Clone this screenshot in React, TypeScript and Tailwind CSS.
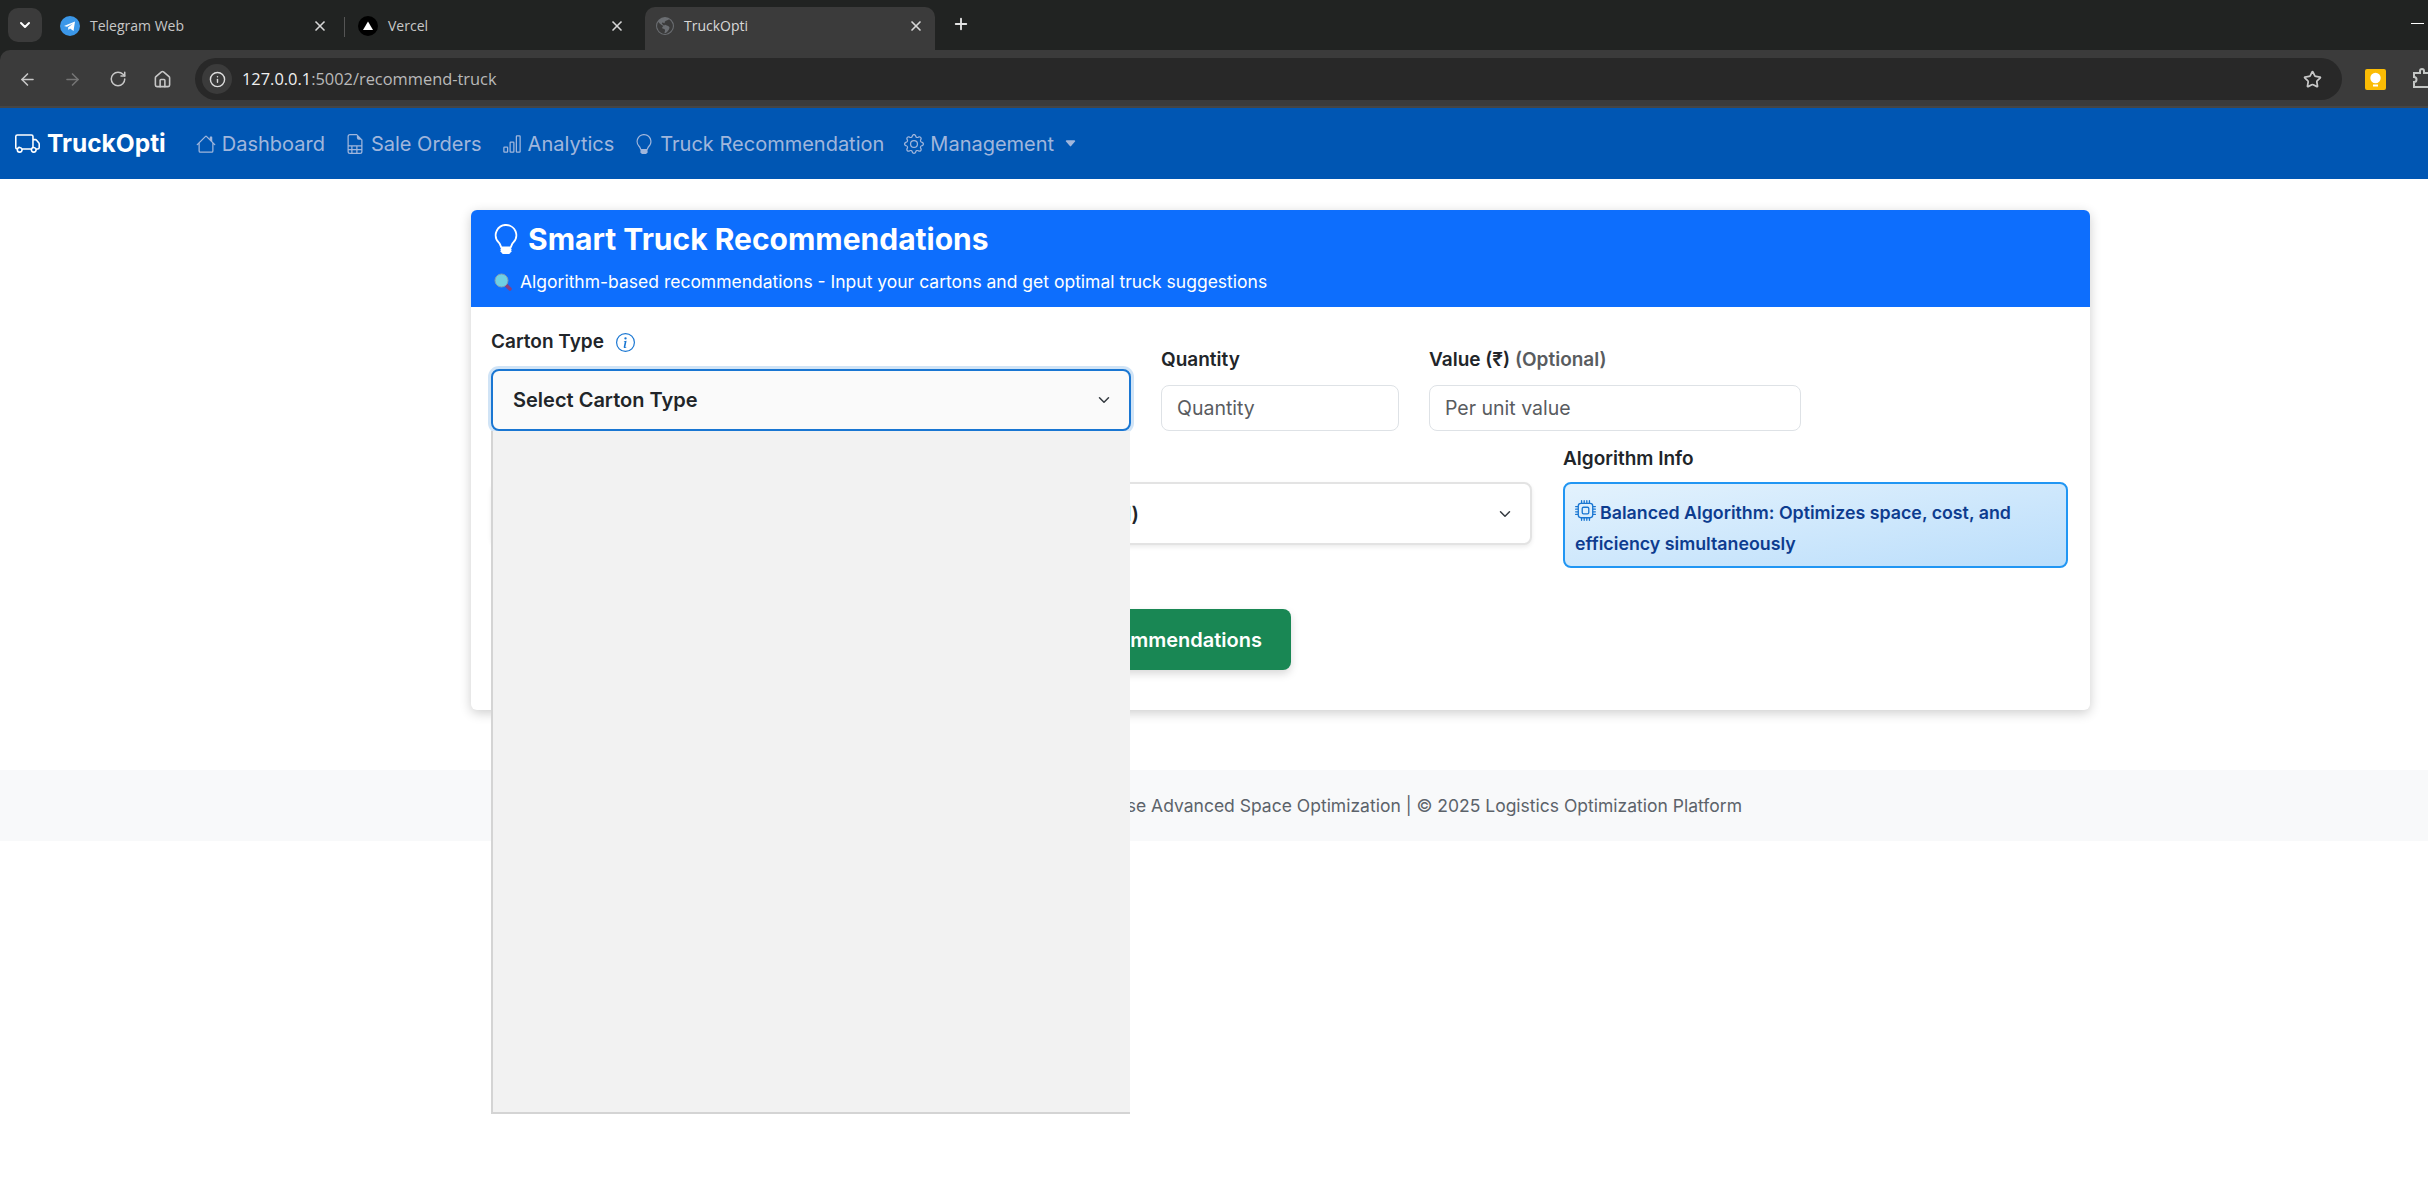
import { ArrowLeft, ArrowRight, ChevronDown, Home, Info, Plus, RotateCw, Star, X } from 'lucide-react';
import {
  BsBarChart,
  BsCaretDownFill,
  BsCpu,
  BsFileEarmarkSpreadsheet,
  BsGear,
  BsGlobeAmericas,
  BsHouse,
  BsInfoCircle,
  BsLightbulb,
  BsTruck,
} from 'react-icons/bs';

const navLinks = [
  { label: 'Dashboard', icon: BsHouse },
  { label: 'Sale Orders', icon: BsFileEarmarkSpreadsheet },
  { label: 'Analytics', icon: BsBarChart },
  { label: 'Truck Recommendation', icon: BsLightbulb },
];

function TelegramIcon() {
  return (
    <svg viewBox="0 0 20 20" className="w-5 h-5 shrink-0">
      <circle cx="10" cy="10" r="10" fill="#3b97e8" />
      <path d="M4 10 15 5.5 13.5 15 10 12.5 8.5 14 8 11.5 13 7.5 7 10.8Z" fill="#fff" />
    </svg>
  );
}

function VercelIcon() {
  return (
    <svg viewBox="0 0 20 20" className="w-5 h-5 shrink-0">
      <circle cx="10" cy="10" r="10" fill="#000" />
      <path d="M10 5.5 15 14H5Z" fill="#fff" />
    </svg>
  );
}

function KeepIcon() {
  return (
    <svg viewBox="0 0 21 21" className="w-[21px] h-[21px] shrink-0">
      <rect width="21" height="21" rx="2" fill="#fbbc04" />
      <circle cx="10.5" cy="9" r="5.2" fill="#fff" />
      <rect x="8" y="15.5" width="5" height="2" fill="#fff" />
    </svg>
  );
}

function PuzzleIcon() {
  return (
    <svg viewBox="0 0 24 24" className="w-6 h-6 shrink-0" fill="none" stroke="#c4c7c5" strokeWidth="2">
      <path d="M3 6h6V4a2 2 0 0 1 4 0v2h8v14H3v-5a2.5 2.5 0 0 0 0-5Z" />
    </svg>
  );
}

function MagnifierEmoji() {
  return (
    <svg viewBox="0 0 18 18" className="w-[18px] h-[18px] shrink-0">
      <path d="M11 11 16 16" stroke="#8a3f7f" strokeWidth="3.5" strokeLinecap="round" />
      <circle cx="7.5" cy="7.5" r="6.5" fill="#6fd0e4" stroke="#7f9fb5" strokeWidth="1" />
    </svg>
  );
}

function BrowserTab({
  title,
  icon,
  active,
  width,
}: {
  title: string;
  icon: React.ReactNode;
  active?: boolean;
  width: string;
}) {
  return (
    <div
      className={`h-[43px] flex items-center pl-[11px] pr-[11px] pb-[6px] ${width} ${
        active ? 'bg-[#3b3b3b] rounded-t-[10px]' : ''
      }`}
    >
      {icon}
      <span className={`ml-[10px] flex-1 text-[14px] font-["Open_Sans",sans-serif] ${active ? 'text-[#d8d8d8]' : 'text-[#c7c7c7]'}`}>
        {title}
      </span>
      <X className="w-[16px] h-[16px] text-[#d6d6d6]" strokeWidth={2.5} />
    </div>
  );
}

export default function App() {
  return (
    <div className={'min-h-[1195px] bg-white font-["Inter",sans-serif] overflow-hidden'}>
      {/* Browser tabs */}
      <div className="h-[50px] bg-[#212322] flex items-end relative">
        <div className="absolute left-[8px] top-[8px] w-[34px] h-[34px] rounded-[10px] bg-[#3b3b3b] flex items-center justify-center">
          <ChevronDown className="w-4 h-4 text-white" strokeWidth={3} />
        </div>
        <div className="ml-[49px] flex items-end">
          <BrowserTab title="Telegram Web" icon={<TelegramIcon />} width="w-[290px]" />
          <div className="w-px h-5 bg-[#555] mb-[13px] ml-[5px] mr-[2px]" />
          <BrowserTab title="Vercel" icon={<VercelIcon />} width="w-[289px]" />
          <div className="w-[9px]" />
          <BrowserTab
            title="TruckOpti"
            icon={<BsGlobeAmericas className="w-[18px] h-[18px] text-[#6b6e72] shrink-0" />}
            width="w-[290px]"
            active
          />
          <Plus className="ml-[17px] mb-[17px] w-[18px] h-[18px] text-[#e3e3e3]" strokeWidth={2.5} />
        </div>
        <div className="absolute right-[4px] top-[23px] w-[13px] h-px bg-white" />
      </div>

      {/* Browser toolbar */}
      <div className="bg-[#212322]">
        <div className="h-[58px] pt-[2px] bg-[#3b3b3b] rounded-tl-[10px] flex items-center border-b-2 border-[#454545] overflow-hidden">
          <div className="w-[195px] pl-[18px] pr-[23px] flex items-center justify-between shrink-0">
            <ArrowLeft className="w-[19px] h-[19px] text-[#c7c7c7]" />
            <ArrowRight className="w-[19px] h-[19px] text-[#757575]" />
            <RotateCw className="w-[18px] h-[18px] text-[#c7c7c7]" />
            <Home className="w-[19px] h-[19px] text-[#c7c7c7]" />
          </div>
          <div className="w-[2147px] shrink-0 h-[42px] rounded-full bg-[#282828] flex items-center pl-[7px] pr-[20px]">
            <div className="w-[30px] h-[30px] rounded-full bg-[#3b3b3b] flex items-center justify-center">
              <Info className="w-[17px] h-[17px] text-[#dedede]" />
            </div>
            <span className={'ml-[10px] flex-1 text-[16.4px] font-["Open_Sans",sans-serif] text-[#b9b9b9]'}>
              <span className="text-[#f0f0f0]">127.0.0.1</span>:5002/recommend-truck
            </span>
            <Star className="w-[19px] h-[19px] text-[#c7c7c7]" strokeWidth={2.2} />
          </div>
          <div className="ml-[23px] flex items-center gap-[25px] shrink-0">
            <KeepIcon />
            <PuzzleIcon />
          </div>
        </div>
      </div>

      {/* Navbar */}
      <nav className="h-[71px] bg-[#0056b3] flex items-center pl-[15px]">
        <div className="flex items-center gap-[7px] text-white text-[24.5px] font-bold mr-[30px]">
          <BsTruck className="w-[25px] h-[25px]" />
          TruckOpti
        </div>
        <div className="flex items-center gap-[20px] text-[20px] text-[#a0b6dc]">
          {navLinks.map((link) => {
            const Icon = link.icon;
            return (
              <a key={link.label} className="flex items-center gap-[6px]">
                <Icon className="w-[20px] h-[20px]" />
                {link.label}
              </a>
            );
          })}
          <a className="flex items-center gap-[6px]">
            <BsGear className="w-[20px] h-[20px]" />
            Management
            <BsCaretDownFill className="ml-[4px] w-[13px] h-[13px]" />
          </a>
        </div>
      </nav>

      {/* Card */}
      <main className="pt-[31px] pl-[471px]">
        <div className="w-[1619px] bg-white rounded-[6px] shadow-[0_3px_12px_rgba(0,0,0,0.2)]">
          <div className="h-[97px] bg-[#0d6efd] rounded-t-[6px] px-[20px] pt-[9px] text-white">
            <h1 className="flex items-center gap-[7px] text-[30px] font-bold leading-[40px]">
              <BsLightbulb className="w-[30px] h-[30px] text-white" />
              Smart Truck Recommendations
            </h1>
            <p className="mt-[11px] flex items-center gap-[8px] text-[17.5px] leading-[24px]">
              <span className="ml-[3px]">
                <MagnifierEmoji />
              </span>
              Algorithm-based recommendations - Input your cartons and get optimal truck suggestions
            </p>
          </div>

          <div className="px-[20px] pt-[20px] pb-[40px]">
            <div className="flex items-end gap-[30px]">
              <div className="w-[640px]">
                <label className="flex items-center gap-[12px] text-[19px] font-semibold text-[#212529] h-[27px] mt-[2px] mb-[13px]">
                  Carton Type
                  <BsInfoCircle className="w-[19px] h-[19px] text-[#1976d2]" />
                </label>
                <div className="relative">
                  <div className="h-[62px] rounded-[8px] border-2 border-[#1976d2] bg-[#fafafa] shadow-[0_0_0_3px_rgba(25,118,210,0.2)] flex items-center justify-between pl-[20px] pr-[16px] text-[20px] font-semibold text-[#212529]">
                    Select Carton Type
                    <ChevronDown className="w-[18px] h-[18px] text-[#343a40]" />
                  </div>
                  <div className="absolute left-0 top-full z-10 w-[639px] h-[683px] bg-[#f2f2f2] border-l-2 border-b-2 border-[#d4d4d4]" />
                </div>
              </div>
              <div className="w-[238px]">
                <label className="block text-[19px] font-semibold text-[#212529] h-[27px] mb-[12px]">Quantity</label>
                <input
                  placeholder="Quantity"
                  className="w-full h-[46px] rounded-[8px] border border-[#dee2e6] px-[15px] text-[19.5px] placeholder:text-[#595c5f]"
                />
              </div>
              <div className="w-[372px]">
                <label className="block text-[19px] font-semibold text-[#212529] h-[27px] mb-[12px]">
                  Value (₹) <span className="text-[#595c5f]">(Optional)</span>
                </label>
                <input
                  placeholder="Per unit value"
                  className="w-full h-[46px] rounded-[8px] border border-[#dee2e6] px-[15px] text-[19.5px] placeholder:text-[#595c5f]"
                />
              </div>
            </div>

            <div className="mt-[14px] flex items-start gap-[31px]">
              <div className="w-[1041px]">
                <label className="block text-[19px] font-semibold text-[#212529] h-[27px] mb-[10px]">Optimization Goal</label>
                <div className="h-[63px] rounded-[8px] border-2 border-[#e3e3e3] bg-white shadow-[0_2px_4px_rgba(0,0,0,0.08)] flex items-center justify-between pr-[16px] text-[20px] font-semibold text-[#212529]">
                  <span className="w-[646px] text-right">Balanced (Recommended)</span>
                  <ChevronDown className="w-[18px] h-[18px] text-[#343a40]" />
                </div>
              </div>
              <div className="w-[505px]">
                <label className="block text-[19px] font-semibold text-[#212529] h-[27px] mb-[10px]">Algorithm Info</label>
                <div className="h-[86px] rounded-[8px] border-2 border-[#2196f3] bg-gradient-to-br from-[#e3f2fd] to-[#bbdefb] px-[10px] pt-[13px] text-[17.8px] leading-[31px] font-semibold text-[#0d3c8f]">
                  <BsCpu className="inline w-[21px] h-[21px] text-[#1976d2] mr-[4px] align-[-2px]" />
                  Balanced Algorithm: Optimizes space, cost, and efficiency simultaneously
                </div>
              </div>
            </div>

            <div className="mt-[41px] w-[800px] flex justify-end">
              <button className="h-[61px] px-[29px] rounded-[8px] bg-[#198754] text-white text-[20px] font-semibold shadow-[0_4px_8px_rgba(0,0,0,0.15)]">
                Get Smart Recommendations
              </button>
            </div>
          </div>
        </div>
      </main>

      {/* Footer */}
      <footer className="mt-[60px] h-[71px] pt-[2px] bg-[#f8f9fa] flex items-center justify-end pr-[686px] text-[17.5px] text-[#5c636a]">
        TruckOpti Enterprise Advanced Space Optimization | © 2025 Logistics Optimization Platform
      </footer>
    </div>
  );
}
